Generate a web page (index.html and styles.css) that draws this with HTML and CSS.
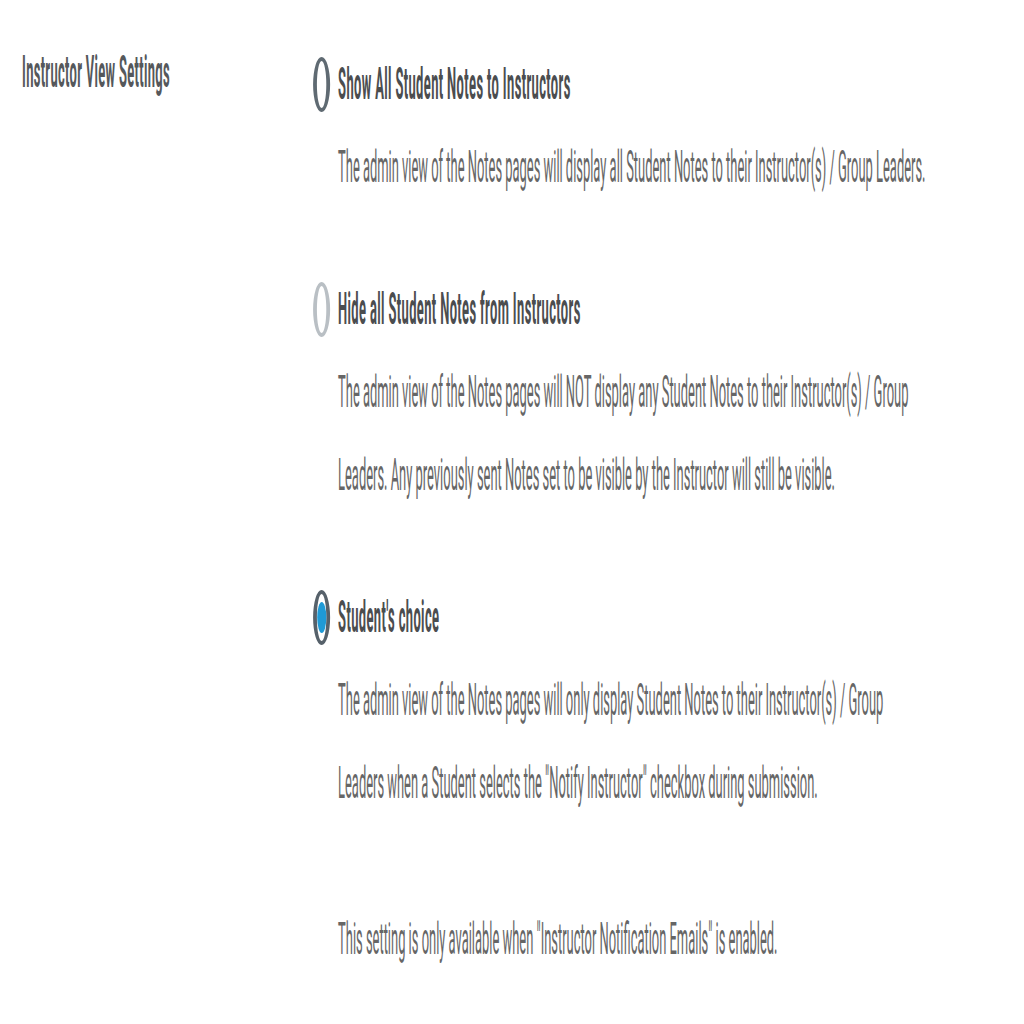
FILE: index.html
```html
<!DOCTYPE html>
<html lang="en">
<head>
<meta charset="utf-8">
<title>Instructor View Settings</title>
<link rel="stylesheet" href="styles.css">
</head>
<body>
<div class="frame">
<div class="page">
  <div class="label">Instructor View Settings</div>
  <div class="options">
    <div class="option">
      <div class="option-head"><span class="radio radio-dark"></span><span class="option-title">Show All Student Notes to Instructors</span></div>
      <p class="desc">The admin view of the Notes pages will display all Student Notes to their Instructor(s) / Group Leaders.</p>
    </div>
    <div class="option">
      <div class="option-head"><span class="radio radio-light"></span><span class="option-title">Hide all Student Notes from Instructors</span></div>
      <p class="desc">The admin view of the Notes pages will NOT display any Student Notes to their Instructor(s) / Group<br>Leaders. Any previously sent Notes set to be visible by the Instructor will still be visible.</p>
    </div>
    <div class="option">
      <div class="option-head"><span class="radio radio-checked"><span class="dot"></span></span><span class="option-title">Student's choice</span></div>
      <p class="desc">The admin view of the Notes pages will only display Student Notes to their Instructor(s) / Group<br>Leaders when a Student selects the "Notify Instructor" checkbox during submission.</p>
    </div>
    <p class="desc note">This setting is only available when "Instructor Notification Emails" is enabled.</p>
  </div>
</div>
</div>
</body>
</html>
```
FILE: styles.css
```css
html, body {
  margin: 0;
  padding: 0;
  background: #ffffff;
  overflow: hidden;
}
.frame {
  width: 1024px;
  height: 1024px;
  overflow: hidden;
}
.page {
  width: 3480px;
  box-sizing: border-box;
  transform: scaleX(0.2937);
  transform-origin: 0 0;
  display: grid;
  grid-template-columns: 991px 1fr;
  padding: 44px 0 0 75px;
  font-family: Roboto, "Liberation Sans", sans-serif;
}
.label {
  font-size: 44px;
  line-height: 56px;
  font-weight: 700;
  letter-spacing: 1.1px;
  color: #55585b;
}
.options {
  display: flex;
  flex-direction: column;
  gap: 60px;
  min-width: 0;
}
.option-head {
  display: flex;
  align-items: center;
  gap: 27px;
  height: 80px;
}
.option-title {
  font-size: 44px;
  font-weight: 700;
  letter-spacing: 1.3px;
  color: #4b4d4f;
}
.radio {
  box-sizing: border-box;
  width: 58px;
  height: 55px;
  border-radius: 50%;
  border-style: solid;
  border-width: 4px 13px;
  display: flex;
  align-items: center;
  justify-content: center;
  background: #fff;
}
.radio-dark { border-color: #5f6a72; }
.radio-light { border-color: #b9bfc4; }
.radio-checked { border-color: #56616a; }
.dot {
  width: 31px;
  height: 31px;
  border-radius: 50%;
  background: #1f9ad6;
}
.desc {
  margin: 2px 0 0 85px;
  font-size: 44px;
  line-height: 83px;
  color: #666666;
  white-space: nowrap;
}
.note {
  margin-top: 13px;
}
```
